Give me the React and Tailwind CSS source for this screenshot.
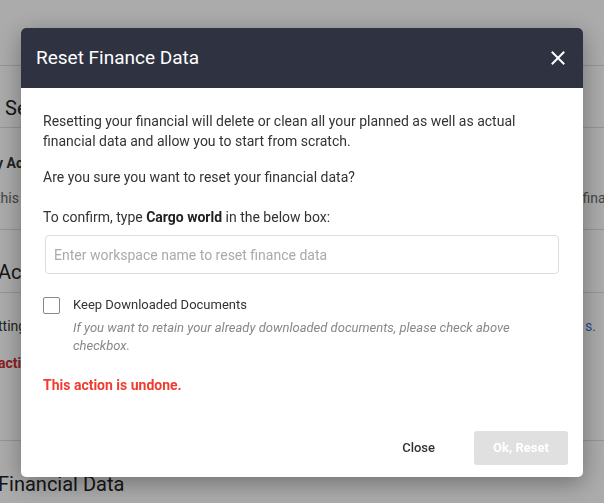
import React from 'react';

function BackgroundPage() {
    return (
        <div className="min-h-[503px] bg-white text-[#333] overflow-hidden" style={{ fontFamily: 'Roboto, "Liberation Sans", sans-serif' }}>
            <div className="h-[66px] border-b border-[#ddd]" />
            <div className="h-[62px] border-b border-[#ddd] flex items-end pb-[4px] pl-[5px] text-[20px] text-[#222]">Settings</div>
            <div className="h-[102px] border-b border-[#ddd] pt-[25px]">
                <div className="flex justify-between">
                    <span className="-ml-[4px] text-[14px] font-bold">y Account Data</span>
                </div>
                <div className="flex justify-between mt-[14px] text-[14px] text-[#666]">
                    <span className="-ml-[4px]">this workspace</span>
                    <span className="-mr-[24px]">finance</span>
                </div>
            </div>
            <div className="h-[63px] border-b border-[#ddd] flex items-end pb-[5px] -ml-[2px] text-[20px] text-[#222]">Account</div>
            <div className="h-[148px] border-b border-[#ddd] pt-[23px]">
                <div className="flex justify-between text-[14px]">
                    <span className="-ml-[2px]">tting your account</span>
                    <span className="mr-[8px] text-[#3b6fd1]">s.</span>
                </div>
                <div className="mt-[16px] text-[14px] font-bold text-[#d32f2f] -ml-[2px]">action</div>
            </div>
            <div className="pt-[28px] -ml-[2px] text-[20px] text-[#222]">Financial Data</div>
        </div>
    );
}

function ResetModal() {
    return (
        <div className="fixed inset-0 bg-black/[0.33] flex items-start justify-center pt-[28px]" style={{ fontFamily: 'Roboto, "Liberation Sans", sans-serif' }}>
            <div className="w-[562px] bg-white rounded-[5px] overflow-hidden shadow-[0_6px_24px_rgba(0,0,0,0.35)]">
                <div className="h-[60px] bg-[#2e3241] flex items-center justify-between pl-[15px] pr-[17px]">
                    <h3 className="text-[19px] text-white">Reset Finance Data</h3>
                    <svg width="16" height="16" viewBox="0 0 16 16" className="text-white">
                        <path d="M2.5 2.5 L13.5 13.5 M13.5 2.5 L2.5 13.5" stroke="currentColor" strokeWidth="2" strokeLinecap="square" />
                    </svg>
                </div>
                <div className="px-[22px] pt-[23px] text-[14px] leading-[20px] text-[#333]">
                    <p>Resetting your financial will delete or clean all your planned as well as actual financial data and allow you to start from scratch.</p>
                    <p className="mt-[16px]">Are you sure you want to reset your financial data?</p>
                    <p className="mt-[20px]">To confirm, type <b className="font-bold text-[#222]">Cargo world</b> in the below box:</p>
                    <input
                        className="mt-[8px] mx-[2px] w-[514px] h-[39px] border border-[#ddd] rounded-[4px] px-[8px] text-[14px] outline-none placeholder:text-[#aaa]"
                        placeholder="Enter workspace name to reset finance data"
                    />
                    <div className="mt-[22px] flex items-start gap-[13px]">
                        <span className="mt-[1px] w-[17px] h-[17px] border border-[#888] rounded-[2px] shrink-0" />
                        <div className="w-[460px]">
                            <div className="text-[13px] leading-[18px] text-[#333]">Keep Downloaded Documents</div>
                            <div className="mt-[5px] text-[13px] leading-[18px] italic text-[#888]">If you want to retain your already downloaded documents, please check above checkbox.</div>
                        </div>
                    </div>
                    <p className="mt-[20px] font-bold text-[#f23b2f]">This action is undone.</p>
                </div>
                <div className="flex justify-end items-center gap-[39px] pr-[15px] pt-[36px] pb-[12px]">
                    <button className="text-[13px] font-medium text-[#333]">Close</button>
                    <button className="w-[94px] h-[34px] rounded-[3px] bg-[#e0e0e0] text-[13px] font-bold text-white">Ok, Reset</button>
                </div>
            </div>
        </div>
    );
}

export default function App() {
    return (
        <div className="relative">
            <BackgroundPage />
            <ResetModal />
        </div>
    );
}
